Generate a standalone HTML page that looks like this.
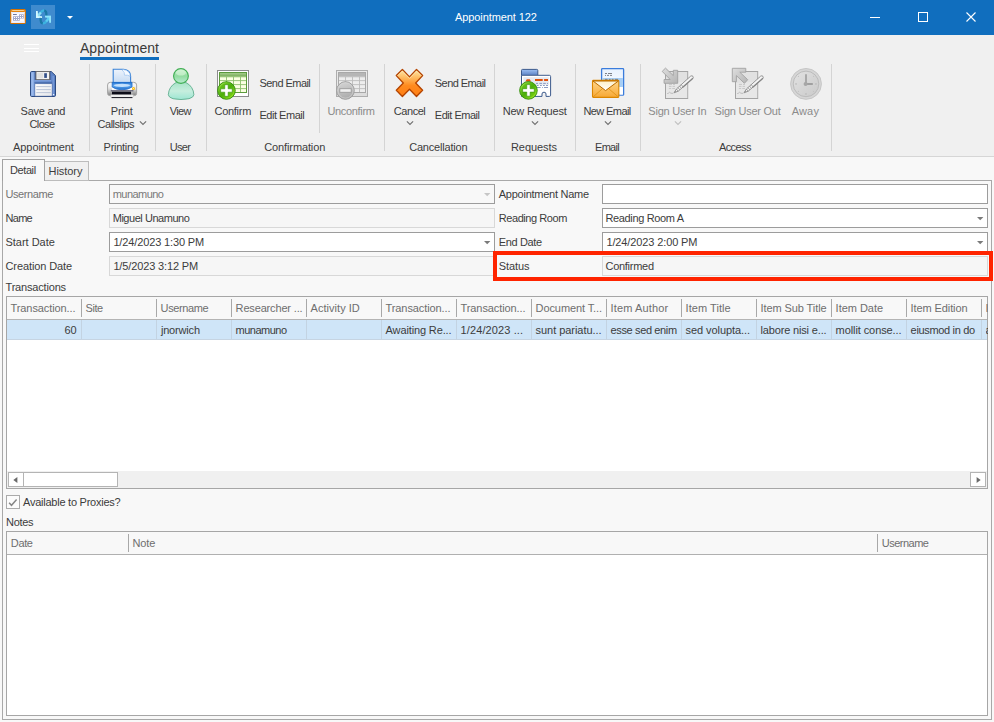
<!DOCTYPE html>
<html>
<head>
<meta charset="utf-8">
<title>Appointment 122</title>
<style>
*{box-sizing:border-box;margin:0;padding:0}
html,body{width:994px;height:722px;overflow:hidden;background:#f0f0f0}
body{font-family:"Liberation Sans",sans-serif;font-size:11px;color:#3c3c3c;position:relative}
.abs{position:absolute}
.t{position:absolute;white-space:nowrap}
svg{overflow:visible}
</style>
</head>
<body>
<div class="abs" style="left:0px;top:0px;width:994px;height:35px;background:#106ebe;"></div>
<div class="t" style="left:455.0px;top:11px;font-size:11px;line-height:13px;height:13px;letter-spacing:-0.085px;color:#ffffff;">Appointment 122</div>
<svg class="abs" style="left:860px;top:0px" width="134" height="35" viewBox="0 0 134 35">
<path d="M10 17.5H20" stroke="#fff" stroke-width="1" fill="none"/>
<rect x="58.5" y="12.5" width="9" height="9" stroke="#fff" stroke-width="1" fill="none"/>
<path d="M106.5 12.5L115.5 21.5M115.5 12.5L106.5 21.5" stroke="#fff" stroke-width="1.1" fill="none"/>
</svg>
<div class="abs" style="left:31px;top:5px;width:24px;height:24px;background:#3f8bce;"></div>
<svg class="abs" style="left:67px;top:16px" width="7" height="3" viewBox="0 0 7 3"><path d="M0 0H6L3 3Z" fill="#fff"/></svg>
<div class="abs" style="left:0px;top:35px;width:994px;height:121px;background:#f0f0f0;"></div>
<div class="abs" style="left:0px;top:156px;width:994px;height:1px;background:#d6d6d6;"></div>
<div class="abs" style="left:24px;top:44px;width:15px;height:1px;background:#ffffff;"></div>
<div class="abs" style="left:24px;top:48px;width:15px;height:1px;background:#ffffff;"></div>
<div class="abs" style="left:24px;top:51px;width:15px;height:1px;background:#ffffff;"></div>
<div class="t" style="left:80.0px;top:40px;font-size:14px;line-height:16px;height:16px;letter-spacing:0.037px;color:#3a3a3a;">Appointment</div>
<div class="abs" style="left:80px;top:57px;width:79px;height:3px;background:#106ebe;"></div>
<div class="abs" style="left:89px;top:64px;width:1px;height:87px;background:#d4d4d4;"></div>
<div class="abs" style="left:155px;top:64px;width:1px;height:87px;background:#d4d4d4;"></div>
<div class="abs" style="left:206px;top:64px;width:1px;height:87px;background:#d4d4d4;"></div>
<div class="abs" style="left:384px;top:64px;width:1px;height:87px;background:#d4d4d4;"></div>
<div class="abs" style="left:494px;top:64px;width:1px;height:87px;background:#d4d4d4;"></div>
<div class="abs" style="left:575px;top:64px;width:1px;height:87px;background:#d4d4d4;"></div>
<div class="abs" style="left:640px;top:64px;width:1px;height:87px;background:#d4d4d4;"></div>
<div class="abs" style="left:831px;top:64px;width:1px;height:87px;background:#d4d4d4;"></div>
<div class="abs" style="left:319px;top:64px;width:1px;height:69px;background:#d4d4d4;"></div>
<div class="t" style="left:20.6px;top:105px;font-size:11px;line-height:13px;height:13px;letter-spacing:-0.243px;color:#3c3c3c;">Save and</div>
<div class="t" style="left:29.5px;top:118px;font-size:11px;line-height:13px;height:13px;letter-spacing:-0.631px;color:#3c3c3c;">Close</div>
<div class="t" style="left:110.7px;top:105px;font-size:11px;line-height:13px;height:13px;letter-spacing:-0.131px;color:#3c3c3c;">Print</div>
<div class="t" style="left:97.6px;top:118px;font-size:11px;line-height:13px;height:13px;letter-spacing:-0.492px;color:#3c3c3c;">Callslips</div>
<div class="t" style="left:169.8px;top:105px;font-size:11px;line-height:13px;height:13px;letter-spacing:-0.629px;color:#3c3c3c;">View</div>
<div class="t" style="left:214.5px;top:105px;font-size:11px;line-height:13px;height:13px;letter-spacing:-0.283px;color:#3c3c3c;">Confirm</div>
<div class="t" style="left:259.5px;top:77px;font-size:11px;line-height:13px;height:13px;letter-spacing:-0.550px;color:#3c3c3c;">Send Email</div>
<div class="t" style="left:259.5px;top:109px;font-size:11px;line-height:13px;height:13px;letter-spacing:-0.478px;color:#3c3c3c;">Edit Email</div>
<div class="t" style="left:327.4px;top:105px;font-size:11px;line-height:13px;height:13px;letter-spacing:-0.316px;color:#8b8b8b;">Unconfirm</div>
<div class="t" style="left:393.8px;top:105px;font-size:11px;line-height:13px;height:13px;letter-spacing:-0.450px;color:#3c3c3c;">Cancel</div>
<div class="t" style="left:434.8px;top:77px;font-size:11px;line-height:13px;height:13px;letter-spacing:-0.561px;color:#3c3c3c;">Send Email</div>
<div class="t" style="left:434.8px;top:109px;font-size:11px;line-height:13px;height:13px;letter-spacing:-0.478px;color:#3c3c3c;">Edit Email</div>
<div class="t" style="left:502.7px;top:105px;font-size:11px;line-height:13px;height:13px;letter-spacing:-0.196px;color:#3c3c3c;">New Request</div>
<div class="t" style="left:583.4px;top:105px;font-size:11px;line-height:13px;height:13px;letter-spacing:-0.583px;color:#3c3c3c;">New Email</div>
<div class="t" style="left:648.3px;top:105px;font-size:11px;line-height:13px;height:13px;letter-spacing:-0.206px;color:#8b8b8b;">Sign User In</div>
<div class="t" style="left:714.6px;top:105px;font-size:11px;line-height:13px;height:13px;letter-spacing:-0.239px;color:#8b8b8b;">Sign User Out</div>
<div class="t" style="left:791.7px;top:105px;font-size:11px;line-height:13px;height:13px;letter-spacing:0.171px;color:#8b8b8b;">Away</div>
<div class="t" style="left:13.1px;top:141px;font-size:11px;line-height:13px;height:13px;letter-spacing:-0.095px;color:#3c3c3c;">Appointment</div>
<div class="t" style="left:103.6px;top:141px;font-size:11px;line-height:13px;height:13px;letter-spacing:-0.273px;color:#3c3c3c;">Printing</div>
<div class="t" style="left:169.8px;top:141px;font-size:11px;line-height:13px;height:13px;letter-spacing:-0.683px;color:#3c3c3c;">User</div>
<div class="t" style="left:264.3px;top:141px;font-size:11px;line-height:13px;height:13px;letter-spacing:-0.125px;color:#3c3c3c;">Confirmation</div>
<div class="t" style="left:409.2px;top:141px;font-size:11px;line-height:13px;height:13px;letter-spacing:-0.188px;color:#3c3c3c;">Cancellation</div>
<div class="t" style="left:511.0px;top:141px;font-size:11px;line-height:13px;height:13px;letter-spacing:-0.071px;color:#3c3c3c;">Requests</div>
<div class="t" style="left:595.0px;top:141px;font-size:11px;line-height:13px;height:13px;letter-spacing:-0.700px;color:#3c3c3c;">Email</div>
<div class="t" style="left:718.9px;top:141px;font-size:11px;line-height:13px;height:13px;letter-spacing:-0.567px;color:#3c3c3c;">Access</div>
<svg class="abs" style="left:138.5px;top:121px" width="8" height="5" viewBox="0 0 8 5"><path d="M0.9 0.3L4 3.4L7.1 0.3" stroke="#707070" stroke-width="1.15" fill="none"/></svg>
<svg class="abs" style="left:406px;top:121px" width="8" height="5" viewBox="0 0 8 5"><path d="M0.9 0.3L4 3.4L7.1 0.3" stroke="#707070" stroke-width="1.15" fill="none"/></svg>
<svg class="abs" style="left:531px;top:121px" width="8" height="5" viewBox="0 0 8 5"><path d="M0.9 0.3L4 3.4L7.1 0.3" stroke="#707070" stroke-width="1.15" fill="none"/></svg>
<svg class="abs" style="left:604px;top:121px" width="8" height="5" viewBox="0 0 8 5"><path d="M0.9 0.3L4 3.4L7.1 0.3" stroke="#707070" stroke-width="1.15" fill="none"/></svg>
<svg class="abs" style="left:674px;top:121px" width="8" height="5" viewBox="0 0 8 5"><path d="M0.9 0.3L4 3.4L7.1 0.3" stroke="#c0c0c0" stroke-width="1.15" fill="none"/></svg>
<div class="abs" style="left:0px;top:157px;width:994px;height:565px;background:#f8f8f8;"></div>
<div class="abs" style="left:2px;top:180px;width:990px;height:540px;background:#f8f8f8;border:1px solid #a8a8a8;"></div>
<div class="abs" style="left:44px;top:161px;width:45px;height:20px;background:#f0f0f0;border:1px solid #bcbcbc;"></div>
<div class="abs" style="left:2px;top:159px;width:43px;height:22px;background:#f8f8f8;border:1px solid #a2a2a2;border-bottom:none;"></div>
<div class="t" style="left:10.0px;top:164px;font-size:11px;line-height:13px;height:13px;letter-spacing:-0.405px;color:#3c3c3c;">Detail</div>
<div class="t" style="left:48.5px;top:165px;font-size:11px;line-height:13px;height:13px;letter-spacing:-0.042px;color:#3c3c3c;">History</div>
<div class="abs" style="left:109px;top:184px;width:386px;height:20px;background:#f8f8f8;border:1px solid #9c9c9c;"></div>
<div class="abs" style="left:109px;top:208px;width:386px;height:20px;background:#f6f6f6;border:1px solid #d8d8d8;"></div>
<div class="abs" style="left:109px;top:232px;width:386px;height:20px;background:#ffffff;border:1px solid #9c9c9c;"></div>
<div class="abs" style="left:109px;top:256px;width:386px;height:20px;background:#f6f6f6;border:1px solid #d8d8d8;"></div>
<div class="abs" style="left:602px;top:184px;width:386px;height:20px;background:#ffffff;border:1px solid #9c9c9c;"></div>
<div class="abs" style="left:602px;top:208px;width:386px;height:20px;background:#ffffff;border:1px solid #9c9c9c;"></div>
<div class="abs" style="left:602px;top:232px;width:386px;height:20px;background:#ffffff;border:1px solid #9c9c9c;"></div>
<div class="abs" style="left:602px;top:256px;width:386px;height:20px;background:#f6f6f6;border:1px solid #d8d8d8;"></div>
<svg class="abs" style="left:483.8px;top:192.8px" width="7" height="4" viewBox="0 0 7 4"><path d="M0 0H6.4L3.2 3.3Z" fill="#c6c6c6"/></svg>
<svg class="abs" style="left:483.8px;top:240.8px" width="7" height="4" viewBox="0 0 7 4"><path d="M0 0H6.4L3.2 3.3Z" fill="#7a7a7a"/></svg>
<svg class="abs" style="left:977px;top:216.8px" width="7" height="4" viewBox="0 0 7 4"><path d="M0 0H6.4L3.2 3.3Z" fill="#7a7a7a"/></svg>
<svg class="abs" style="left:977px;top:240.8px" width="7" height="4" viewBox="0 0 7 4"><path d="M0 0H6.4L3.2 3.3Z" fill="#7a7a7a"/></svg>
<div class="t" style="left:5.5px;top:188px;font-size:11px;line-height:13px;height:13px;letter-spacing:-0.421px;color:#747474;">Username</div>
<div class="t" style="left:5.5px;top:212px;font-size:11px;line-height:13px;height:13px;letter-spacing:-0.700px;color:#3c3c3c;">Name</div>
<div class="t" style="left:5.5px;top:236px;font-size:11px;line-height:13px;height:13px;letter-spacing:-0.022px;color:#3c3c3c;">Start Date</div>
<div class="t" style="left:5.5px;top:260px;font-size:11px;line-height:13px;height:13px;letter-spacing:-0.098px;color:#3c3c3c;">Creation Date</div>
<div class="t" style="left:112.7px;top:188px;font-size:11px;line-height:13px;height:13px;letter-spacing:-0.538px;color:#787878;">munamuno</div>
<div class="t" style="left:112.7px;top:212px;font-size:11px;line-height:13px;height:13px;letter-spacing:-0.461px;color:#3c3c3c;">Miguel Unamuno</div>
<div class="t" style="left:113.4px;top:236px;font-size:11px;line-height:13px;height:13px;letter-spacing:-0.134px;color:#3c3c3c;">1/24/2023 1:30 PM</div>
<div class="t" style="left:113.4px;top:260px;font-size:11px;line-height:13px;height:13px;letter-spacing:-0.138px;color:#3c3c3c;">1/5/2023 3:12 PM</div>
<div class="t" style="left:498.8px;top:188px;font-size:11px;line-height:13px;height:13px;letter-spacing:-0.259px;color:#3c3c3c;">Appointment Name</div>
<div class="t" style="left:498.8px;top:212px;font-size:11px;line-height:13px;height:13px;letter-spacing:-0.443px;color:#3c3c3c;">Reading Room</div>
<div class="t" style="left:498.8px;top:236px;font-size:11px;line-height:13px;height:13px;letter-spacing:-0.368px;color:#3c3c3c;">End Date</div>
<div class="t" style="left:498.8px;top:260px;font-size:11px;line-height:13px;height:13px;letter-spacing:-0.098px;color:#3c3c3c;">Status</div>
<div class="t" style="left:605.5px;top:212px;font-size:11px;line-height:13px;height:13px;letter-spacing:-0.361px;color:#3c3c3c;">Reading Room A</div>
<div class="t" style="left:606.4px;top:236px;font-size:11px;line-height:13px;height:13px;letter-spacing:-0.115px;color:#3c3c3c;">1/24/2023 2:00 PM</div>
<div class="t" style="left:605.5px;top:260px;font-size:11px;line-height:13px;height:13px;letter-spacing:-0.281px;color:#3c3c3c;">Confirmed</div>
<div class="abs" style="left:493px;top:251px;width:500px;height:30px;border:4px solid #ff2400;"></div>
<div class="t" style="left:5.5px;top:281px;font-size:11px;line-height:13px;height:13px;letter-spacing:-0.178px;color:#3c3c3c;">Transactions</div>
<div class="abs" style="left:6px;top:296px;width:982px;height:193px;background:#ffffff;border:1px solid #a6a6a6;"></div>
<div class="abs" style="left:7px;top:297px;width:980px;height:22px;background:#f8f8f8;"></div>
<div class="abs" style="left:7px;top:319px;width:980px;height:1px;background:#b4b4b4;"></div>
<div class="abs" style="left:7px;top:320px;width:980px;height:19px;background:#cfe5f8;"></div>
<div class="abs" style="left:7px;top:339px;width:980px;height:1px;background:#c6d4e2;"></div>
<div class="abs" style="left:81px;top:299px;width:1px;height:18px;background:#a8a8a8;"></div>
<div class="abs" style="left:81px;top:320px;width:1px;height:19px;background:#c3d3e2;"></div>
<div class="t" style="left:10.6px;top:302px;font-size:11px;line-height:13px;height:13px;letter-spacing:-0.104px;color:#6e6e6e;">Transaction...</div>
<div class="t" style="left:64.5px;top:324px;font-size:11px;line-height:13px;height:13px;letter-spacing:-0.050px;color:#3c3c3c;">60</div>
<div class="abs" style="left:156px;top:299px;width:1px;height:18px;background:#a8a8a8;"></div>
<div class="abs" style="left:156px;top:320px;width:1px;height:19px;background:#c3d3e2;"></div>
<div class="t" style="left:85.6px;top:302px;font-size:11px;line-height:13px;height:13px;letter-spacing:-0.479px;color:#6e6e6e;">Site</div>
<div class="abs" style="left:231px;top:299px;width:1px;height:18px;background:#a8a8a8;"></div>
<div class="abs" style="left:231px;top:320px;width:1px;height:19px;background:#c3d3e2;"></div>
<div class="t" style="left:160.6px;top:302px;font-size:11px;line-height:13px;height:13px;letter-spacing:-0.393px;color:#6e6e6e;">Username</div>
<div class="t" style="left:160.9px;top:324px;font-size:11px;line-height:13px;height:13px;letter-spacing:-0.170px;color:#3c3c3c;">jnorwich</div>
<div class="abs" style="left:306px;top:299px;width:1px;height:18px;background:#a8a8a8;"></div>
<div class="abs" style="left:306px;top:320px;width:1px;height:19px;background:#c3d3e2;"></div>
<div class="t" style="left:235.6px;top:302px;font-size:11px;line-height:13px;height:13px;letter-spacing:-0.159px;color:#6e6e6e;">Researcher ...</div>
<div class="t" style="left:235.6px;top:324px;font-size:11px;line-height:13px;height:13px;letter-spacing:-0.509px;color:#3c3c3c;">munamuno</div>
<div class="abs" style="left:381px;top:299px;width:1px;height:18px;background:#a8a8a8;"></div>
<div class="abs" style="left:381px;top:320px;width:1px;height:19px;background:#c3d3e2;"></div>
<div class="t" style="left:310.6px;top:302px;font-size:11px;line-height:13px;height:13px;letter-spacing:0.032px;color:#6e6e6e;">Activity ID</div>
<div class="abs" style="left:456px;top:299px;width:1px;height:18px;background:#a8a8a8;"></div>
<div class="abs" style="left:456px;top:320px;width:1px;height:19px;background:#c3d3e2;"></div>
<div class="t" style="left:385.6px;top:302px;font-size:11px;line-height:13px;height:13px;letter-spacing:-0.104px;color:#6e6e6e;">Transaction...</div>
<div class="t" style="left:385.6px;top:324px;font-size:11px;line-height:13px;height:13px;letter-spacing:-0.130px;color:#3c3c3c;">Awaiting Re...</div>
<div class="abs" style="left:531px;top:299px;width:1px;height:18px;background:#a8a8a8;"></div>
<div class="abs" style="left:531px;top:320px;width:1px;height:19px;background:#c3d3e2;"></div>
<div class="t" style="left:460.6px;top:302px;font-size:11px;line-height:13px;height:13px;letter-spacing:-0.104px;color:#6e6e6e;">Transaction...</div>
<div class="t" style="left:460.6px;top:324px;font-size:11px;line-height:13px;height:13px;letter-spacing:0.109px;color:#3c3c3c;">1/24/2023 ...</div>
<div class="abs" style="left:606px;top:299px;width:1px;height:18px;background:#a8a8a8;"></div>
<div class="abs" style="left:606px;top:320px;width:1px;height:19px;background:#c3d3e2;"></div>
<div class="t" style="left:535.6px;top:302px;font-size:11px;line-height:13px;height:13px;letter-spacing:-0.099px;color:#6e6e6e;">Document T...</div>
<div class="t" style="left:535.6px;top:324px;font-size:11px;line-height:13px;height:13px;letter-spacing:-0.049px;color:#3c3c3c;">sunt pariatu...</div>
<div class="abs" style="left:681px;top:299px;width:1px;height:18px;background:#a8a8a8;"></div>
<div class="abs" style="left:681px;top:320px;width:1px;height:19px;background:#c3d3e2;"></div>
<div class="t" style="left:610.6px;top:302px;font-size:11px;line-height:13px;height:13px;letter-spacing:0.125px;color:#6e6e6e;">Item Author</div>
<div class="t" style="left:610.6px;top:324px;font-size:11px;line-height:13px;height:13px;letter-spacing:-0.370px;color:#3c3c3c;">esse sed enim</div>
<div class="abs" style="left:756px;top:299px;width:1px;height:18px;background:#a8a8a8;"></div>
<div class="abs" style="left:756px;top:320px;width:1px;height:19px;background:#c3d3e2;"></div>
<div class="t" style="left:685.6px;top:302px;font-size:11px;line-height:13px;height:13px;letter-spacing:0.042px;color:#6e6e6e;">Item Title</div>
<div class="t" style="left:685.6px;top:324px;font-size:11px;line-height:13px;height:13px;letter-spacing:-0.072px;color:#3c3c3c;">sed volupta...</div>
<div class="abs" style="left:831px;top:299px;width:1px;height:18px;background:#a8a8a8;"></div>
<div class="abs" style="left:831px;top:320px;width:1px;height:19px;background:#c3d3e2;"></div>
<div class="t" style="left:760.6px;top:302px;font-size:11px;line-height:13px;height:13px;letter-spacing:-0.096px;color:#6e6e6e;">Item Sub Title</div>
<div class="t" style="left:760.6px;top:324px;font-size:11px;line-height:13px;height:13px;letter-spacing:-0.167px;color:#3c3c3c;">labore nisi e...</div>
<div class="abs" style="left:906px;top:299px;width:1px;height:18px;background:#a8a8a8;"></div>
<div class="abs" style="left:906px;top:320px;width:1px;height:19px;background:#c3d3e2;"></div>
<div class="t" style="left:835.6px;top:302px;font-size:11px;line-height:13px;height:13px;letter-spacing:-0.023px;color:#6e6e6e;">Item Date</div>
<div class="t" style="left:835.6px;top:324px;font-size:11px;line-height:13px;height:13px;letter-spacing:-0.089px;color:#3c3c3c;">mollit conse...</div>
<div class="abs" style="left:981px;top:299px;width:1px;height:18px;background:#a8a8a8;"></div>
<div class="abs" style="left:981px;top:320px;width:1px;height:19px;background:#c3d3e2;"></div>
<div class="t" style="left:910.6px;top:302px;font-size:11px;line-height:13px;height:13px;letter-spacing:-0.097px;color:#6e6e6e;">Item Edition</div>
<div class="t" style="left:910.6px;top:324px;font-size:11px;line-height:13px;height:13px;letter-spacing:-0.333px;color:#3c3c3c;">eiusmod in do</div>
<div class="t" style="left:985.6px;top:302px;font-size:11px;line-height:13px;height:13px;letter-spacing:-0.700px;color:#6e6e6e;width:2px;overflow:hidden;">I</div>
<div class="t" style="left:985.6px;top:324px;font-size:11px;line-height:13px;height:13px;letter-spacing:-0.700px;color:#3c3c3c;width:2px;overflow:hidden;">a</div>
<div class="abs" style="left:7px;top:471px;width:980px;height:17px;background:#f0f0f0;"></div>
<div class="abs" style="left:8px;top:472px;width:16px;height:15px;background:#ffffff;border:1px solid #b4b4b4;"></div>
<div class="abs" style="left:23px;top:472px;width:95px;height:15px;background:#ffffff;border:1px solid #b4b4b4;"></div>
<div class="abs" style="left:970px;top:472px;width:16px;height:15px;background:#ffffff;border:1px solid #b4b4b4;"></div>
<svg class="abs" style="left:13px;top:476.5px" width="5" height="6" viewBox="0 0 5 6"><path d="M4.4 0.1L0.3 3L4.4 5.9Z" fill="#6a6a6a"/></svg>
<svg class="abs" style="left:976px;top:476.5px" width="5" height="6" viewBox="0 0 5 6"><path d="M0.6 0.1L4.7 3L0.6 5.9Z" fill="#6a6a6a"/></svg>
<div class="abs" style="left:6px;top:495px;width:14px;height:14px;background:#fcfcfc;border:1px solid #ababab;"></div>
<svg class="abs" style="left:8px;top:498px" width="10" height="8" viewBox="0 0 10 8"><path d="M1.1 4.7L3.5 7.3L8.6 1.5" stroke="#868686" stroke-width="1.45" fill="none"/></svg>
<div class="t" style="left:23.0px;top:496px;font-size:11px;line-height:13px;height:13px;letter-spacing:-0.243px;color:#3c3c3c;">Available to Proxies?</div>
<div class="t" style="left:6.0px;top:516px;font-size:11px;line-height:13px;height:13px;letter-spacing:-0.312px;color:#3c3c3c;">Notes</div>
<div class="abs" style="left:6px;top:531px;width:982px;height:185px;background:#ffffff;border:1px solid #a6a6a6;"></div>
<div class="abs" style="left:7px;top:532px;width:980px;height:22px;background:#f8f8f8;"></div>
<div class="abs" style="left:7px;top:554px;width:980px;height:1px;background:#b0b0b0;"></div>
<div class="abs" style="left:128px;top:534px;width:1px;height:18px;background:#a8a8a8;"></div>
<div class="abs" style="left:877px;top:534px;width:1px;height:18px;background:#a8a8a8;"></div>
<div class="t" style="left:10.8px;top:537px;font-size:11px;line-height:13px;height:13px;letter-spacing:-0.350px;color:#6e6e6e;">Date</div>
<div class="t" style="left:132.5px;top:537px;font-size:11px;line-height:13px;height:13px;letter-spacing:-0.150px;color:#6e6e6e;">Note</div>
<div class="t" style="left:881.8px;top:537px;font-size:11px;line-height:13px;height:13px;letter-spacing:-0.507px;color:#6e6e6e;">Username</div>
<svg width="0" height="0" class="abs"><defs>
<linearGradient id="gFl" x1="0" y1="0" x2="1" y2="0"><stop offset="0" stop-color="#8eaee6"/><stop offset="0.25" stop-color="#6f95d6"/><stop offset="1" stop-color="#5a80c4"/></linearGradient>
<linearGradient id="gLbl" x1="0" y1="0" x2="1" y2="1"><stop offset="0" stop-color="#ffffff"/><stop offset="1" stop-color="#e4e6ea"/></linearGradient>
<linearGradient id="gPaper" x1="0" y1="0" x2="0" y2="1"><stop offset="0" stop-color="#eef4fc"/><stop offset="1" stop-color="#c6dbf3"/></linearGradient>
<linearGradient id="gPrBody" x1="0" y1="0" x2="0" y2="1"><stop offset="0" stop-color="#f4f4f4"/><stop offset="0.5" stop-color="#ffffff"/><stop offset="1" stop-color="#b8b8b8"/></linearGradient>
<linearGradient id="gTray" x1="0" y1="0" x2="0" y2="1"><stop offset="0" stop-color="#2a7ad6"/><stop offset="0.5" stop-color="#5aa4ee"/><stop offset="1" stop-color="#1e6cc8"/></linearGradient>
<linearGradient id="gHead" x1="0" y1="0" x2="0" y2="1"><stop offset="0" stop-color="#c8f0cc"/><stop offset="0.5" stop-color="#92dca0"/><stop offset="1" stop-color="#b8ecd2"/></linearGradient>
<linearGradient id="gBody" x1="0" y1="0" x2="0" y2="1"><stop offset="0" stop-color="#a8e4c8"/><stop offset="0.5" stop-color="#c6eede"/><stop offset="1" stop-color="#9ce6d2"/></linearGradient>
<linearGradient id="gPlus" x1="0" y1="0" x2="1" y2="1"><stop offset="0" stop-color="#7ad020"/><stop offset="0.5" stop-color="#4cae0c"/><stop offset="1" stop-color="#8ee010"/></linearGradient>
<linearGradient id="gTh" x1="0" y1="0" x2="0" y2="1"><stop offset="0" stop-color="#a4cc8a"/><stop offset="1" stop-color="#78aa58"/></linearGradient>
<linearGradient id="gX" x1="0" y1="0" x2="0" y2="1"><stop offset="0" stop-color="#ffe9a8"/><stop offset="0.35" stop-color="#ffb356"/><stop offset="0.6" stop-color="#ff8a1e"/><stop offset="1" stop-color="#ff7e14"/></linearGradient>
<linearGradient id="gTab" x1="0" y1="0" x2="0" y2="1"><stop offset="0" stop-color="#9ec0f4"/><stop offset="1" stop-color="#5c82c4"/></linearGradient>
<linearGradient id="gEnv" x1="0" y1="0" x2="0" y2="1"><stop offset="0" stop-color="#ffd68a"/><stop offset="1" stop-color="#f7a834"/></linearGradient>
<linearGradient id="gFlap" x1="0" y1="0" x2="0" y2="1"><stop offset="0" stop-color="#fff0c8"/><stop offset="1" stop-color="#ffffff"/></linearGradient>
<linearGradient id="gDoc" x1="0" y1="0" x2="0" y2="1"><stop offset="0" stop-color="#e8f2fe"/><stop offset="1" stop-color="#ffffff"/></linearGradient>
<linearGradient id="gGy" x1="0" y1="0" x2="1" y2="1"><stop offset="0" stop-color="#dedede"/><stop offset="1" stop-color="#b4b4b4"/></linearGradient><linearGradient id="gGc" x1="0" y1="0" x2="0.3" y2="1"><stop offset="0" stop-color="#d8d8d8"/><stop offset="1" stop-color="#adadad"/></linearGradient><linearGradient id="gRing" x1="0" y1="0" x2="1" y2="1"><stop offset="0" stop-color="#c8f880"/><stop offset="0.5" stop-color="#58b818" stop-opacity="0"/><stop offset="1" stop-color="#c0f840"/></linearGradient>
<linearGradient id="gSide" x1="0" y1="0" x2="0" y2="1"><stop offset="0" stop-color="#ffffff" stop-opacity="0"/><stop offset="0.45" stop-color="#c8c8c8" stop-opacity="0.5"/><stop offset="1" stop-color="#7e7e7e" stop-opacity="0.85"/></linearGradient><linearGradient id="gClk" x1="0" y1="0" x2="1" y2="1"><stop offset="0" stop-color="#e2e2e2"/><stop offset="1" stop-color="#cacaca"/></linearGradient>
<linearGradient id="gCy" x1="0" y1="0" x2="1" y2="1"><stop offset="0" stop-color="#bdf2ff"/><stop offset="1" stop-color="#27a7da"/></linearGradient>
</defs></svg>
<svg class="abs" style="left:30px;top:71px" width="26" height="26" viewBox="0 0 26 26">
<path d="M1.8 0.5H21.2L25.5 4.6V24.3Q25.5 25.5 24.3 25.5H1.7Q0.5 25.5 0.5 24.3V1.8Q0.5 0.5 1.8 0.5Z" fill="url(#gFl)" stroke="#2c4a80" stroke-width="1"/>
<rect x="1.5" y="1.5" width="2" height="23" fill="#a4c0f0" opacity="0.7"/>
<rect x="4.6" y="0.8" width="1.5" height="8.4" fill="#3c5c9c"/><rect x="19.6" y="0.8" width="1.4" height="8.4" fill="#4a6cac"/><rect x="4.6" y="9" width="16.6" height="1.6" fill="#7ea2e0" opacity="0.9"/><rect x="4.4" y="10.8" width="18" height="1.7" fill="#4668a8" opacity="0.75"/><rect x="22.4" y="5" width="1.6" height="19" fill="#86a8e2" opacity="0.55"/>
<rect x="6" y="0.6" width="13.6" height="8" fill="#f4f4f4" stroke="#6e6a68" stroke-width="0.9"/>
<rect x="7.2" y="2" width="6" height="5.2" fill="#dcdcdc" opacity="0.8"/>
<rect x="14.2" y="2.2" width="2.7" height="4.7" fill="#34508a"/>
<rect x="4.9" y="12.8" width="17.2" height="12.3" fill="url(#gLbl)" stroke="#3c5a94" stroke-width="0.5"/>
<path d="M6.3 15.6H20.8M6.3 18.6H20.8M6.3 21.6H20.8" stroke="#b4c0d4" stroke-width="0.9"/>
<rect x="23" y="23" width="1.3" height="1.3" fill="#f0f4ff"/>
</svg>
<svg class="abs" style="left:100px;top:64px" width="44" height="40" viewBox="0 0 44 40">
<path d="M7.6 21Q7.6 18.3 10.5 18.3H33.5Q36.6 18.3 36.6 21V29.5Q36.6 31.6 34.4 31.6H9.8Q7.6 31.6 7.6 29.5Z" fill="url(#gPrBody)" stroke="#9a9a9a" stroke-width="0.9"/>
<path d="M8 21Q8 18.8 10.5 18.8H12V31H9.8Q8 31 8 29.5Z" fill="url(#gSide)"/><path d="M36.2 21Q36.2 18.8 33.5 18.8H32.2V31H34.4Q36.2 31 36.2 29.5Z" fill="url(#gSide)"/><path d="M13.2 5.2H23.5Q30.6 6 30.6 12V18.6H13.2Z" fill="url(#gPaper)" stroke="#3b82d6" stroke-width="1.1"/>
<path d="M22 6Q25 8 24.5 11.2Q28 10.5 30.2 12.5Q30 6.5 23.5 5.6Z" fill="#f6faff" stroke="#7fb0e8" stroke-width="0.5"/>
<path d="M12.2 18.4H32V23Q28 25.8 22 25.8Q16 25.8 12.2 23Z" fill="url(#gTray)" stroke="#1e6ac6" stroke-width="0.8"/>
<ellipse cx="22" cy="21.3" rx="8.3" ry="1.6" fill="#d8ecff" opacity="0.85"/>
<rect x="10.8" y="26.2" width="22.6" height="1.2" fill="#55556a"/>
<rect x="12" y="27.6" width="19.2" height="3.2" fill="#0c0c18"/>
<path d="M10.6 30.8H33.4V32.6Q33.4 33.2 32.6 33.2H11.4Q10.6 33.2 10.6 32.6Z" fill="#fafafa" stroke="#b0b0b0" stroke-width="0.5"/>
<rect x="11.6" y="33" width="20.8" height="1.1" fill="#14141e" opacity="0.9"/>
<circle cx="33.5" cy="24.4" r="1.5" fill="#ffb400"/><circle cx="33.5" cy="24.4" r="0.7" fill="#fff080"/>
</svg>
<svg class="abs" style="left:160px;top:64px" width="44" height="40" viewBox="0 0 44 40">
<path d="M8.3 30.8Q8.8 22.5 16 18.6H26Q33.4 22.5 33.9 30.8Q33.6 33.4 29 34.7Q21 36.4 13 34.7Q8.6 33.4 8.3 30.8Z" fill="url(#gBody)" stroke="#62ae90" stroke-width="0.9"/>
<circle cx="20.95" cy="12" r="7.4" fill="url(#gHead)" stroke="#3fae52" stroke-width="1.1"/>
<ellipse cx="20.9" cy="8.6" rx="5" ry="3" fill="#d8f6da" opacity="0.6"/>
</svg>
<svg class="abs" style="left:210px;top:64px" width="44" height="40" viewBox="0 0 44 40"><rect x="7.5" y="6.5" width="31" height="26" fill="#ffffff" stroke="#8c8c8c" stroke-width="1"/><rect x="9.5" y="8.5" width="27" height="20" fill="#fbffe2" stroke="#5c9a3c" stroke-width="1"/><rect x="10" y="9" width="26" height="3.6" fill="url(#gTh)"/><path d="M16.5 12.6V28M23.5 12.6V28M30.5 12.6V28M10 12.8H36M10 16.6H36M10 20.6H36M10 24.6H36" stroke="#8cc06c" stroke-width="0.9" fill="none"/><circle cx="16.45" cy="26.5" r="8.8" fill="url(#gPlus)" stroke="#2f8c08" stroke-width="0.9"/><circle cx="16.45" cy="26.5" r="7.7" fill="none" stroke="url(#gRing)" stroke-width="1"/>
<path d="M10.649999999999999 24.8H14.75V20.7H18.15V24.8H22.25V28.2H18.15V32.3H14.75V28.2H10.649999999999999Z" fill="#ffffff" stroke="#35940c" stroke-width="0.6"/></svg>
<svg class="abs" style="left:329px;top:64px" width="44" height="40" viewBox="0 0 44 40"><rect x="7.5" y="6.5" width="31" height="26" fill="#e9e9e9" stroke="#adadad" stroke-width="1"/><rect x="8" y="29" width="30" height="3" fill="#dcdcdc"/><rect x="9.5" y="8.5" width="27" height="20" fill="#ededed" stroke="#a8a8a8" stroke-width="1"/><rect x="10" y="9" width="26" height="3.6" fill="#b6b6b6"/><path d="M16.5 12.6V28M23.5 12.6V28M30.5 12.6V28M10 12.8H36M10 16.6H36M10 20.6H36M10 24.6H36" stroke="#bcbcbc" stroke-width="0.9" fill="none"/><circle cx="16.45" cy="26.5" r="8.8" fill="url(#gGc)" stroke="#9e9e9e" stroke-width="1"/><circle cx="16.45" cy="26.5" r="7.7" fill="none" stroke="#d6d6d6" stroke-width="0.8" opacity="0.8"/><rect x="10.8" y="24.7" width="11.4" height="3.6" fill="#f0f0f0" stroke="#9a9a9a" stroke-width="0.9"/></svg>
<svg class="abs" style="left:388px;top:62px" width="44" height="40" viewBox="0 0 44 40">
<path d="M8.3 13.6L14.4 7.5L21.5 14.9L28.5 7.5L34.6 13.6L27.7 21L34.6 28.3L28.5 34.5L21.5 27.3L14.4 34.5L8.3 28.3L15.3 21Z" fill="url(#gX)" stroke="#b44400" stroke-width="1.35" stroke-linejoin="round"/>
<path d="M9.6 13.7L14.4 8.9L21.5 16.4L28.5 8.9L33.3 13.7" fill="none" stroke="#fff6d0" stroke-width="0.7" opacity="0.8"/>
</svg>
<svg class="abs" style="left:512px;top:62px" width="44" height="40" viewBox="0 0 44 40">
<path d="M9.5 13.3V8.4Q9.5 7.4 10.5 7.4H24.8Q25.8 7.4 25.8 8.4V13.3" fill="url(#gTab)" stroke="#3c5a8c" stroke-width="1"/>
<path d="M9.5 13.3H37.4Q38.6 13.3 38.6 14.5V33.2Q38.6 34.4 37.4 34.4H34V32Q34 30.2 32 30.2Q30 30.2 30 32V34.4H9.5Z" fill="#ffffff" stroke="#3c5a8c" stroke-width="1"/>
<rect x="11.4" y="15.2" width="25.4" height="8" fill="#e6e9f0"/>
<rect x="23" y="17" width="7.7" height="2" fill="#e0500c"/><rect x="32.1" y="17" width="3.9" height="2" fill="#e0500c"/>
<path d="M13.4 19.6L14.8 17.2H17.8L19 19.6Z" fill="#e0500c"/>
<path d="M24 21.4H26M27.4 21.4H30M31.2 21.4H33.8M35 21.4H36M24.6 23.5H26.6M28 23.5H29.8M31 23.5H32.8M34 23.5H36M24.4 25.5H28.6M30 25.5H30.8M32 25.5H36" stroke="#7c90bc" stroke-width="0.9"/>
<circle cx="16.45" cy="28.4" r="8.8" fill="url(#gPlus)" stroke="#2f8c08" stroke-width="0.9"/><circle cx="16.45" cy="28.4" r="7.7" fill="none" stroke="url(#gRing)" stroke-width="1"/>
<path d="M10.649999999999999 26.7H14.75V22.599999999999998H18.15V26.7H22.25V30.099999999999998H18.15V34.199999999999996H14.75V30.099999999999998H10.649999999999999Z" fill="#ffffff" stroke="#35940c" stroke-width="0.6"/></svg>
<svg class="abs" style="left:586px;top:62px" width="44" height="40" viewBox="0 0 44 40">
<rect x="15.6" y="6.6" width="22" height="26.6" rx="0.8" fill="url(#gDoc)" stroke="#3a7cdc" stroke-width="1.3"/>
<rect x="16.3" y="16" width="20.6" height="9" fill="#a6cef6"/>
<rect x="33.5" y="25" width="3.4" height="7.5" fill="#ffffff"/>
<path d="M19 11.5H21M22 11.5H26M19 13.4H20M21 13.4H23M24 13.4H26M19 17.4H21.5M23 17.4H24.5M26 17.4H27.5M29 17.4H32" stroke="#70747c" stroke-width="0.9"/>
<rect x="6.5" y="18.4" width="26.3" height="17" rx="0.8" fill="url(#gEnv)" stroke="#dc8600" stroke-width="1.1"/>
<path d="M7 35L16.5 26.6M32.4 35L22.6 26.6" stroke="#e09418" stroke-width="0.9" fill="none"/>
<path d="M7 19L19.6 28.6L32.4 19Z" fill="url(#gFlap)" stroke="#b86a00" stroke-width="1" stroke-linejoin="round"/>
</svg>
<svg class="abs" style="left:655px;top:62px" width="44" height="40" viewBox="0 0 44 40"><rect x="10.5" y="9.5" width="22.2" height="27" fill="#e1e1e1" stroke="#a4a4a4" stroke-width="1"/><path d="M11 21L32.2 19.5V36H11Z" fill="#e9e9e9" opacity="0.8"/>
<path d="M13.9 22.4H17M18 22.4H20M13.9 24.4H16.5M17.6 24.4H20M13.9 26.5H16.2M17.2 26.5H20" stroke="#c4c4c4" stroke-width="0.9"/>
<path d="M12.2 31.6Q14 31.2 14.6 30.2Q15.2 31.6 18.3 31.4" stroke="#b0b0b0" stroke-width="0.8" fill="none"/>
<path d="M19 30.8L21.4 27L35.6 14.2Q37 13.2 38 14.4Q38.8 15.6 37.6 16.8L23.2 29.2Z" fill="#f4f4f4" stroke="#8a8a8a" stroke-width="0.9"/>
<path d="M21.4 27L23.2 29.2M26.2 22.6L28 24.8M23 25.6L24.8 27.8M24.6 24.1L26.4 26.3" stroke="#8e8e8e" stroke-width="0.8" fill="none"/>
<path d="M27.4 25.4L37.9 16.3" stroke="#868686" stroke-width="1.3"/>
<path d="M19 30.8L20.4 28.2L21.6 29.6Z" fill="#9a9a9a"/><path d="M10.5 6.1L18.3 13.6V8.3H22.7V21.3H9.1V17.5H15.2L7.2 9.4Z" fill="url(#gGy)" stroke="#a2a2a2" stroke-width="0.9" stroke-linejoin="round"/></svg>
<svg class="abs" style="left:725px;top:62px" width="44" height="40" viewBox="0 0 44 40"><rect x="10.5" y="9.5" width="22.2" height="27" fill="#e1e1e1" stroke="#a4a4a4" stroke-width="1"/><path d="M11 21L32.2 19.5V36H11Z" fill="#e9e9e9" opacity="0.8"/>
<path d="M13.9 22.4H17M18 22.4H20M13.9 24.4H16.5M17.6 24.4H20M13.9 26.5H16.2M17.2 26.5H20" stroke="#c4c4c4" stroke-width="0.9"/>
<path d="M12.2 31.6Q14 31.2 14.6 30.2Q15.2 31.6 18.3 31.4" stroke="#b0b0b0" stroke-width="0.8" fill="none"/>
<path d="M19 30.8L21.4 27L35.6 14.2Q37 13.2 38 14.4Q38.8 15.6 37.6 16.8L23.2 29.2Z" fill="#f4f4f4" stroke="#8a8a8a" stroke-width="0.9"/>
<path d="M21.4 27L23.2 29.2M26.2 22.6L28 24.8M23 25.6L24.8 27.8M24.6 24.1L26.4 26.3" stroke="#8e8e8e" stroke-width="0.8" fill="none"/>
<path d="M27.4 25.4L37.9 16.3" stroke="#868686" stroke-width="1.3"/>
<path d="M19 30.8L20.4 28.2L21.6 29.6Z" fill="#9a9a9a"/><path d="M7.3 6.3H20.8V10.2H14.8L22.7 17.7L19.4 21.3L11.4 13.6V19.7H7.3Z" fill="url(#gGy)" stroke="#a2a2a2" stroke-width="0.9" stroke-linejoin="round"/></svg>
<svg class="abs" style="left:784px;top:62px" width="44" height="40" viewBox="0 0 44 40">
<circle cx="22" cy="21.9" r="15.4" fill="#d6d6d6" stroke="#c6c6c6" stroke-width="1"/>
<circle cx="22" cy="21.9" r="12.8" fill="url(#gClk)" stroke="#bcbcbc" stroke-width="1"/>
<path d="M22 22V12.2" stroke="#a0a0a0" stroke-width="1.7"/><path d="M22 22H28.8" stroke="#9a9a9a" stroke-width="1.8"/>
<circle cx="21.6" cy="22" r="2" fill="#a6a6a6"/>
<rect x="11.3" y="21.2" width="1.5" height="1.5" fill="#bcbcbc"/><rect x="31.2" y="21.2" width="1.5" height="1.5" fill="#bcbcbc"/><rect x="21.2" y="31.2" width="1.5" height="1.5" fill="#bcbcbc"/>
<circle cx="14.4" cy="14.4" r="0.6" fill="#c2c2c2"/><circle cx="29.6" cy="14.4" r="0.6" fill="#c2c2c2"/><circle cx="14.4" cy="29.4" r="0.6" fill="#c2c2c2"/><circle cx="29.6" cy="29.4" r="0.6" fill="#c2c2c2"/>
</svg>
<svg class="abs" style="left:6px;top:3px" width="24" height="24" viewBox="0 0 24 24">
<rect x="4.7" y="6.6" width="14.6" height="13.9" rx="1" fill="#fbfbff" stroke="#d87200" stroke-width="1.15"/>
<rect x="5.2" y="7" width="13.6" height="2" fill="#e48410"/>
<rect x="6.2" y="7.2" width="11.6" height="0.7" fill="#fff2cc"/>
<rect x="5.3" y="9" width="13.4" height="1.2" fill="#e4ecff"/>
<rect x="5.3" y="18.6" width="13.4" height="1.2" fill="#e8e8fa"/>
<rect x="7" y="11.1" width="3.8" height="0.8" fill="#4e5888"/>
<path d="M13.1 11.2H17.8V15.6H13.8V17.8H7V13.2H13.1Z" fill="#a2a8cc"/>
<g fill="#ffffff"><rect x="14" y="12" width="1" height="1"/><rect x="16" y="12" width="1" height="1"/><rect x="8" y="14" width="1" height="1"/><rect x="10" y="14" width="1" height="1"/><rect x="12" y="14" width="1" height="1"/><rect x="14" y="14" width="1" height="1"/><rect x="16" y="14" width="1" height="1"/><rect x="8" y="16" width="1" height="1"/><rect x="10" y="16" width="1" height="1"/><rect x="12" y="16" width="1" height="1"/></g>
</svg>
<svg class="abs" style="left:31px;top:5px" width="24" height="24" viewBox="0 0 24 24"><path d="M13 5.4Q15.9 5.9 15.3 11" fill="none" stroke="#1a78a6" stroke-width="2.3"/>
<path d="M9.4 7.8Q11.2 5.2 13.2 5.4" fill="none" stroke="#3cb2e0" stroke-width="2.3"/>
<path d="M5 6V13H11Z" fill="#8edff6"/>
<path d="M6 12L9.8 7.4" fill="none" stroke="#8edff6" stroke-width="2.4"/>
<path d="M5 6H6.8V11.3H11V13H5Z" fill="#d2f8ff"/><g transform="rotate(180 12.5 11.9)"><path d="M13 5.4Q15.9 5.9 15.3 11" fill="none" stroke="#1a78a6" stroke-width="2.3"/>
<path d="M9.4 7.8Q11.2 5.2 13.2 5.4" fill="none" stroke="#3cb2e0" stroke-width="2.3"/>
<path d="M5 6V13H11Z" fill="#5cccf0"/>
<path d="M6 12L9.8 7.4" fill="none" stroke="#5cccf0" stroke-width="2.4"/>
<path d="M5 6H6.8V11.3H11V13H5Z" fill="#8ee2fa"/></g></svg>
</body>
</html>
